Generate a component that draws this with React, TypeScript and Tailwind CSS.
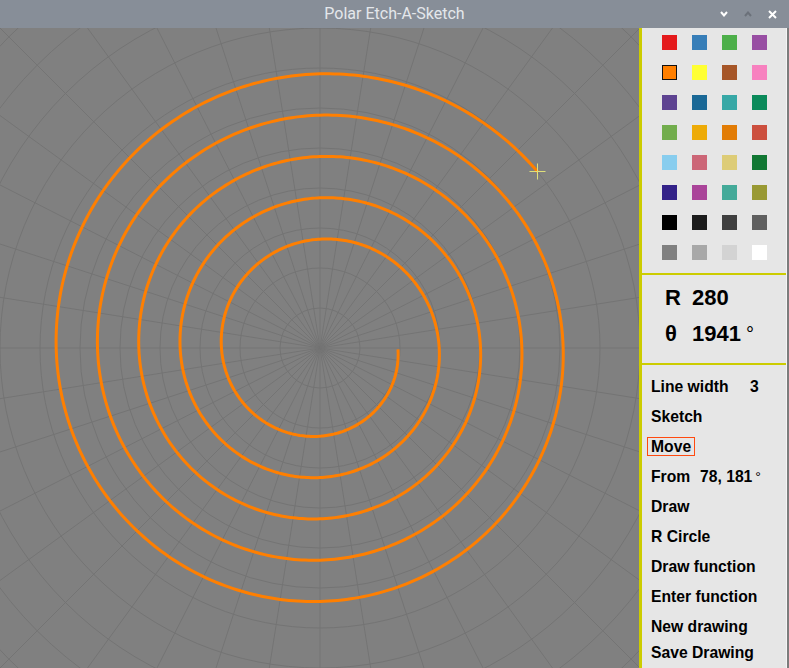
import React from 'react';

const PALETTE = [
  '#e41a1c', '#377eb8', '#4daf4a', '#984ea3',
  '#ff7f00', '#ffff33', '#a65628', '#f781bf',
  '#5e4391', '#1a6896', '#37a8a6', '#0b8a5a',
  '#72ad4d', '#edab07', '#e27c05', '#cc4f3e',
  '#88cdee', '#cc6677', '#ddcc77', '#117733',
  '#332288', '#aa4499', '#44aa99', '#999933',
  '#000000', '#1c1c1c', '#3f3f3f', '#5f5f5f',
  '#808080', '#a8a8a8', '#d3d3d3', '#ffffff',
];

const CX = 320;
const CY = 320;

// archimedean spiral from (78, 181deg) out to (280, 1941deg)
function spiralPath() {
  const pts: string[] = [];
  for (let t = 181; t <= 1941; t += 1) {
    const r = 78 + ((t - 181) * 202) / 1760;
    const phi = ((t - 180) * Math.PI) / 180;
    const x = CX + r * Math.cos(phi);
    const y = CY + r * Math.sin(phi);
    pts.push(`${pts.length === 0 ? 'M' : 'L'}${x.toFixed(2)},${y.toFixed(2)}`);
  }
  return pts.join(' ');
}

function PolarCanvas() {
  const circles = [];
  for (let r = 40; r <= 480; r += 40) circles.push(r);
  const spokes = [];
  for (let i = 0; i < 40; i++) spokes.push((i * 9 * Math.PI) / 180);

  return (
    <svg width={639} height={640} viewBox="0 0 639 640" className="block shrink-0">
      <rect x={0} y={0} width={639} height={640} fill="#808080" />
      <g stroke="#747474" strokeWidth={1} fill="none">
        {circles.map((r) => (
          <circle key={r} cx={CX} cy={CY} r={r} />
        ))}
        {spokes.map((a, i) => (
          <line
            key={i}
            x1={CX}
            y1={CY}
            x2={CX + 480 * Math.cos(a)}
            y2={CY + 480 * Math.sin(a)}
          />
        ))}
      </g>
      <path d={spiralPath()} fill="none" stroke="#ff7f00" strokeWidth={3} strokeLinejoin="round" />
      {/* cursor */}
      <g stroke="#e0e07a" strokeWidth={1}>
        <line x1={529.5} y1={143.5} x2={545.5} y2={143.5} />
        <line x1={537.5} y1={135.5} x2={537.5} y2={151.5} />
      </g>
    </svg>
  );
}

function MenuRow({ children }: { children: React.ReactNode }) {
  return <div className="h-[30px] leading-[30px] whitespace-nowrap">{children}</div>;
}

export default function App() {
  return (
    <div className="w-[789px] h-[668px] flex flex-col overflow-hidden bg-[#808080]">
      {/* Title bar */}
      <div className="h-[28px] shrink-0 bg-[#878e98] grid grid-cols-[1fr_auto_1fr] items-center">
        <div />
        <div
          className="text-[16px] text-[#e4e7eb] leading-none"
          style={{ fontFamily: 'Roboto, "Liberation Sans", sans-serif' }}
        >
          Polar Etch-A-Sketch
        </div>
        <div className="flex justify-end items-center gap-[16px] pr-[12px]">
          <svg width="8" height="6" viewBox="0 0 8 6">
            <polyline points="1,1 4,4.5 7,1" fill="none" stroke="#ffffff" strokeWidth="2" />
          </svg>
          <svg width="8" height="6" viewBox="0 0 8 6">
            <polyline points="1,5 4,1.5 7,5" fill="none" stroke="#6b717a" strokeWidth="2" />
          </svg>
          <svg width="9" height="9" viewBox="0 0 9 9">
            <path d="M1,1 L8,8 M8,1 L1,8" fill="none" stroke="#ffffff" strokeWidth="2" />
          </svg>
        </div>
      </div>

      <div className="flex flex-1 min-h-0">
        <PolarCanvas />

        {/* Side panel */}
        <div className="flex w-[150px] shrink-0">
          <div
            className="w-[147px] flex flex-col bg-[#e6e6e6] border-l-[3px] border-[#cccc00] text-black"
            style={{ fontFamily: '"Liberation Sans", Arial, sans-serif' }}
          >
            {/* Colours */}
            <div className="pl-[20px] pt-[7px] pb-[13px] grid grid-cols-[repeat(4,15px)] gap-[15px]">
              {PALETTE.map((c, i) => (
                <div
                  key={i}
                  className={
                    i === 4
                      ? 'w-[15px] h-[15px] border border-[#111111]'
                      : 'w-[15px] h-[15px]'
                  }
                  style={{ backgroundColor: c }}
                />
              ))}
            </div>
            <div className="h-[3px] bg-[#cccc00]" />

            {/* Position */}
            <div className="pt-[5px] pb-[11px] pl-[23px] text-[22px] font-bold leading-[36px]">
              <div className="whitespace-nowrap">
                <span className="inline-block w-[27px]">R</span>280
              </div>
              <div className="whitespace-nowrap">
                <span className="inline-block w-[27px]">θ</span>1941
                <span className="font-normal ml-[5px] text-[20px]">°</span>
              </div>
            </div>
            <div className="h-[3px] bg-[#cccc00]" />

            {/* Commands */}
            <div className="pt-[7px] pl-[9px] text-[15.7px] font-bold">
              <MenuRow>
                <span className="inline-block w-[99px]">Line width</span>3
              </MenuRow>
              <MenuRow>Sketch</MenuRow>
              <MenuRow>
                <span className="inline-block -ml-[4px] px-[3px] leading-[17px] border border-[#ff4a10]">
                  Move
                </span>
              </MenuRow>
              <MenuRow>
                <span className="inline-block w-[49px]">From</span>78, 181
                <span className="font-normal ml-[3px] text-[14px]">°</span>
              </MenuRow>
              <MenuRow>Draw</MenuRow>
              <MenuRow>R Circle</MenuRow>
              <MenuRow>Draw function</MenuRow>
              <MenuRow>Enter function</MenuRow>
              <MenuRow>New drawing</MenuRow>
              <div className="-mt-[4px] h-[30px] leading-[30px] whitespace-nowrap">Save Drawing</div>
            </div>
          </div>
          <div className="w-[1px] bg-[#f4f4f4]" />
          <div className="w-[2px] bg-[#7c7c7c]" />
        </div>
      </div>
    </div>
  );
}
